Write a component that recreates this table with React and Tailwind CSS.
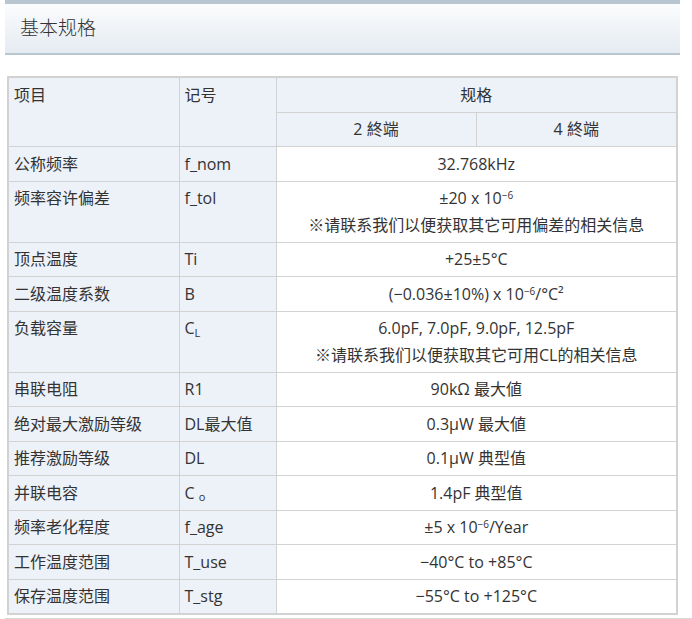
const sup = "text-[10px] relative -top-[5px] align-baseline";

const rows = [
  { item: "公称频率", sym: "f_nom", spec: ["32.768kHz"] },
  { item: "频率容许偏差", sym: "f_tol", spec: [<>±20 x 10<sup className={sup}>−6</sup></>, "※请联系我们以便获取其它可用偏差的相关信息"] },
  { item: "顶点温度", sym: "Ti", spec: ["+25±5°C"] },
  { item: "二级温度系数", sym: "B", spec: [<>(−0.036±10%) x 10<sup className={sup}>−6</sup>/°C²</>] },
  { item: "负载容量", sym: <>C<sub className="text-[11px] align-baseline">L</sub></>, spec: ["6.0pF, 7.0pF, 9.0pF, 12.5pF", "※请联系我们以便获取其它可用CL的相关信息"] },
  { item: "串联电阻", sym: "R1", spec: ["90kΩ 最大値"] },
  { item: "绝对最大激励等级", sym: "DL最大值", spec: ["0.3µW 最大値"] },
  { item: "推荐激励等级", sym: "DL", spec: ["0.1µW 典型值"] },
  { item: "并联电容", sym: <>C <sub className="text-[11px] align-baseline">o</sub></>, spec: ["1.4pF 典型值"] },
  { item: "频率老化程度", sym: "f_age", spec: [<>±5 x 10<sup className={sup}>−6</sup>/Year</>] },
  { item: "工作温度范围", sym: "T_use", spec: ["−40°C to +85°C"] },
  { item: "保存温度范围", sym: "T_stg", spec: ["−55°C to +125°C"] },
];

export default function App() {
  const font = { fontFamily: '"Open Sans", "Noto Sans CJK SC", sans-serif' };
  const head = "bg-[#edf1f8] border border-[#d2d2d2] font-normal py-[3.5px]";
  return (
    <div className="w-[692px] h-[619px] bg-white text-[#333] overflow-hidden" style={font}>
      {/* 标题 */}
      <div className="ml-[5px] w-[675px] h-[55px] border-t-4 border-b-2 border-[#b7c6d1] bg-gradient-to-b from-[#fbfcfd] to-[#e5ebf2] flex items-center pl-[15px]">
        <h2 className="text-[19px] font-light">基本规格</h2>
      </div>

      {/* 表格 */}
      <table className="mt-[21px] ml-[7px] w-[669px] border-collapse border-2 border-[#d2d2d2] text-[16px] leading-[26.5px] table-fixed">
        <colgroup>
          <col className="w-[171px]" />
          <col className="w-[97px]" />
          <col className="w-[200px]" />
          <col className="w-[201px]" />
        </colgroup>
        <thead>
          <tr>
            <th rowSpan={2} className={`${head} text-left align-top pl-[5px]`}>项目</th>
            <th rowSpan={2} className={`${head} text-left align-top pl-[5px]`}>记号</th>
            <th colSpan={2} className={`${head} text-center`}>规格</th>
          </tr>
          <tr>
            <th className={`${head} text-center`}>2 終端</th>
            <th className={`${head} text-center`}>4 終端</th>
          </tr>
        </thead>
        <tbody>
          {rows.map((r, i) => (
            <tr key={i}>
              <td className="bg-[#edf1f8] border border-[#d2d2d2] align-top pl-[5px] py-[3.5px]">{r.item}</td>
              <td className="bg-[#edf1f8] border border-[#d2d2d2] align-top pl-[5px] py-[3.5px]">{r.sym}</td>
              <td colSpan={2} className="bg-white border border-[#d2d2d2] text-center align-top py-[3.5px]">
                {r.spec.map((s, j) => (
                  <div key={j}>{s}</div>
                ))}
              </td>
            </tr>
          ))}
        </tbody>
      </table>

      <div className="mt-[3px] ml-[5px] h-[4px] bg-[#eeeeee] border-t border-[#d8d8d8]" />
    </div>
  );
}
